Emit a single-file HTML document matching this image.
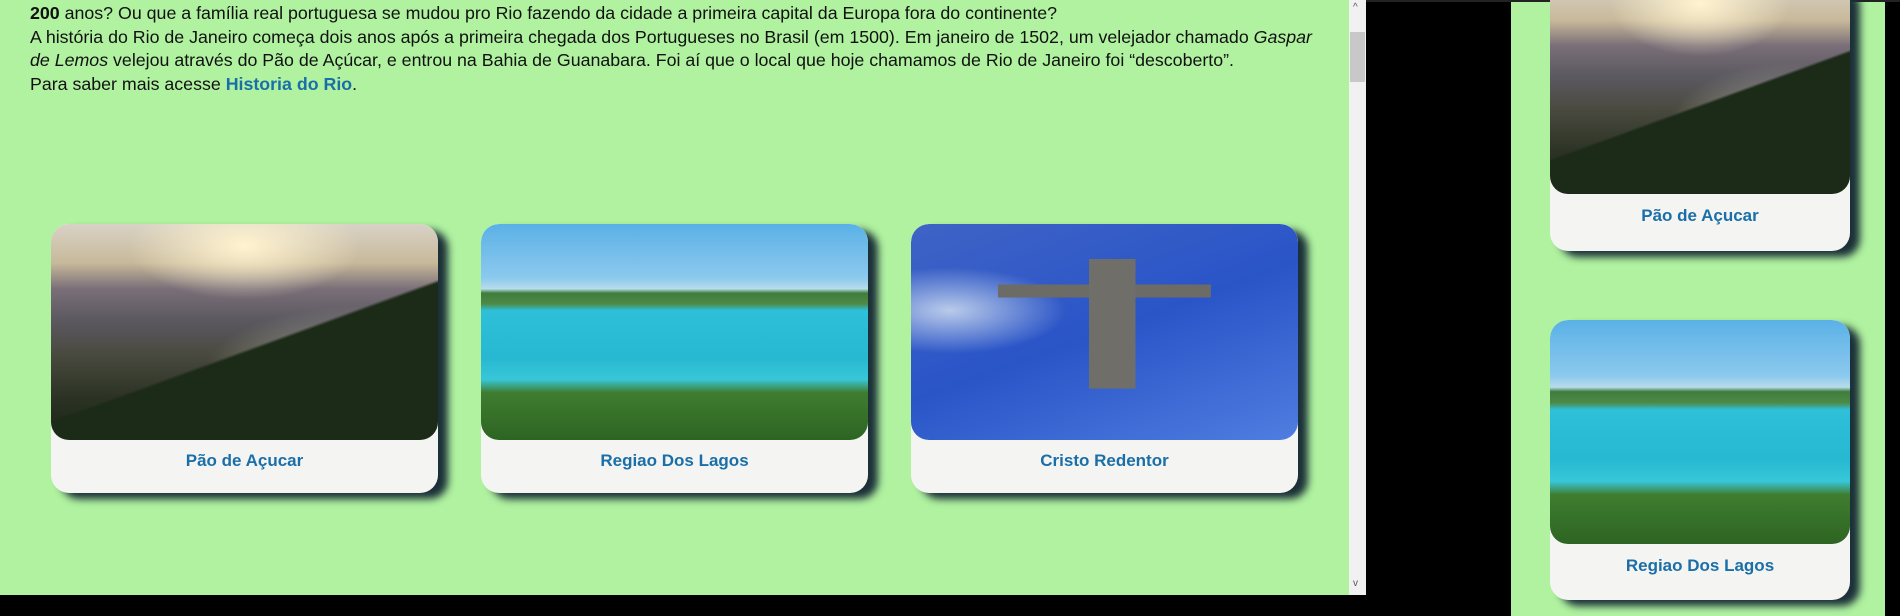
<!DOCTYPE html>
<html><head><meta charset="utf-8"><style>
*{margin:0;padding:0;box-sizing:border-box}
body{width:1900px;height:616px;background:#000;position:relative;overflow:hidden;font-family:"Liberation Sans Narrow","Liberation Sans",sans-serif}
.main{position:absolute;left:0;top:0;width:1349px;height:595px;background:#b0f2a0}
.txt{position:absolute;left:30px;top:2px;font-size:17.8px;line-height:23.5px;color:#111;white-space:nowrap}
.txt a{color:#1a6fa8;font-weight:bold;text-decoration:none}
.sb{position:absolute;left:1349px;top:0;width:17px;height:595px;background:#f1f1f1}
.sb .th{position:absolute;left:1px;top:32px;width:15px;height:50px;background:#c8c8c8}
.sb span{position:absolute;left:4px;font-size:10px;color:#555}
.right{position:absolute;left:1511px;top:2px;width:374px;height:614px;background:#b0f2a0}
.topl{position:absolute;left:1366px;top:0;width:534px;height:2px;background:#222}
.card{position:absolute;background:#f4f4f2;border-radius:18px;box-shadow:10px 6px 8px #1b3038;overflow:hidden}
.card .im{position:absolute;left:0;top:0;width:100%;border-radius:18px}
.card .lb{position:absolute;left:0;width:100%;text-align:center;color:#1a6fa8;font-weight:bold;font-size:17px;font-family:"Liberation Sans",sans-serif}
.pao{background:
radial-gradient(ellipse 30% 25% at 50% 10%,#fff3d0,transparent),
linear-gradient(160deg,transparent 55%,#1c2a18 56%),
radial-gradient(ellipse 40% 30% at 80% 68%,#a9a99a,transparent),
linear-gradient(180deg,#d8d2c6 0%,#c8b99a 18%,#7a6f78 30%,#5b5860 45%,#4a4a40 60%,#2c3324 80%,#1a2414 100%)}
.lagos{background:
linear-gradient(180deg,#5ab1e6 0%,#8cc9ee 25%,#b8dcea 30%,#3f7d3e 32%,#4e8a46 37%,#2ec0d8 40%,#27b8d2 62%,#38c7d8 72%,#3f7d30 78%,#2d6422 100%)}
.cristo{background:
linear-gradient(90deg,transparent 46%,#6f6e68 46%,#6f6e68 58%,transparent 58%) 0 40%/100% 60% no-repeat,
linear-gradient(180deg,transparent 28%,#6c6b66 28%,#6c6b66 34%,transparent 34%) 50% 0/55% 100% no-repeat,
radial-gradient(ellipse 30% 20% at 10% 40%,#b9cbea,transparent),
linear-gradient(160deg,#3f63c6,#2a55c8 50%,#4f7de0)}
</style></head><body>
<div class="main">
<div class="txt"><b>200</b> anos? Ou que a família real portuguesa se mudou pro Rio fazendo da cidade a primeira capital da Europa fora do continente?<br>A história do Rio de Janeiro começa dois anos após a primeira chegada dos Portugueses no Brasil (em 1500). Em janeiro de 1502, um velejador chamado <i>Gaspar</i><br><i>de Lemos</i> velejou através do Pão de Açúcar, e entrou na Bahia de Guanabara. Foi aí que o local que hoje chamamos de Rio de Janeiro foi “descoberto”.<br>Para saber mais acesse <a>Historia do Rio</a>.</div>
<div class="card" style="left:51px;top:224px;width:387px;height:269px"><div class="im pao" style="height:216px"></div><div class="lb" style="top:227px">Pão de Açucar</div></div>
<div class="card" style="left:481px;top:224px;width:387px;height:269px"><div class="im lagos" style="height:216px"></div><div class="lb" style="top:227px">Regiao Dos Lagos</div></div>
<div class="card" style="left:911px;top:224px;width:387px;height:269px"><div class="im cristo" style="height:216px"></div><div class="lb" style="top:227px">Cristo Redentor</div></div>
</div>
<div class="sb"><span style="top:2px">^</span><div class="th"></div><span style="top:578px">v</span></div>
<div class="topl"></div>
<div class="right">
<div class="card" style="left:39px;top:-20px;width:300px;height:269px"><div class="im pao" style="height:212px"></div><div class="lb" style="top:224px">Pão de Açucar</div></div>
<div class="card" style="left:39px;top:318px;width:300px;height:280px"><div class="im lagos" style="height:224px"></div><div class="lb" style="top:236px">Regiao Dos Lagos</div></div>
</div>
</body></html>
